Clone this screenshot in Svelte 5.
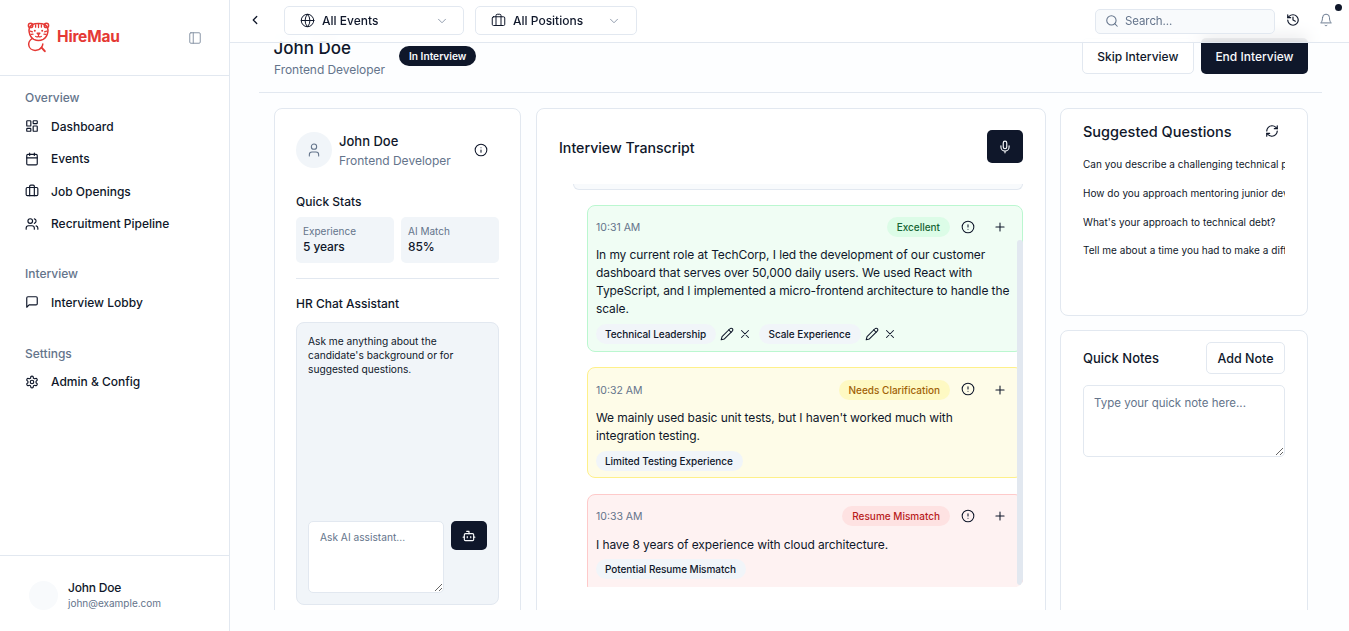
<script>
  const nav = [
    { title: 'Overview', items: [['Dashboard', 'dash'], ['Events', 'cal'], ['Job Openings', 'brief'], ['Recruitment Pipeline', 'users']] },
    { title: 'Interview', items: [['Interview Lobby', 'msg']] },
    { title: 'Settings', items: [['Admin & Config', 'cog']] }
  ];

  const icons = {
    dash: '<rect x="3" y="3" width="7" height="9" rx="1"/><rect x="14" y="3" width="7" height="5" rx="1"/><rect x="14" y="12" width="7" height="9" rx="1"/><rect x="3" y="16" width="7" height="5" rx="1"/>',
    cal: '<path d="M8 2v4M16 2v4"/><rect x="3" y="4" width="18" height="18" rx="2"/><path d="M3 10h18"/>',
    brief: '<path d="M16 20V4a2 2 0 0 0-2-2h-4a2 2 0 0 0-2 2v16"/><rect x="2" y="6" width="20" height="14" rx="2"/>',
    users: '<path d="M16 21v-2a4 4 0 0 0-4-4H6a4 4 0 0 0-4 4v2"/><circle cx="9" cy="7" r="4"/><path d="M22 21v-2a4 4 0 0 0-3-3.87M16 3.13a4 4 0 0 1 0 7.75"/>',
    msg: '<path d="M21 15a2 2 0 0 1-2 2H7l-4 4V5a2 2 0 0 1 2-2h14a2 2 0 0 1 2 2z"/>',
    cog: '<path d="M12.22 2h-.44a2 2 0 0 0-2 2v.18a2 2 0 0 1-1 1.73l-.43.25a2 2 0 0 1-2 0l-.15-.08a2 2 0 0 0-2.73.73l-.22.38a2 2 0 0 0 .73 2.73l.15.1a2 2 0 0 1 1 1.72v.51a2 2 0 0 1-1 1.74l-.15.09a2 2 0 0 0-.73 2.73l.22.38a2 2 0 0 0 2.73.73l.15-.08a2 2 0 0 1 2 0l.43.25a2 2 0 0 1 1 1.73V20a2 2 0 0 0 2 2h.44a2 2 0 0 0 2-2v-.18a2 2 0 0 1 1-1.73l.43-.25a2 2 0 0 1 2 0l.15.08a2 2 0 0 0 2.73-.73l.22-.39a2 2 0 0 0-.73-2.73l-.15-.08a2 2 0 0 1-1-1.74v-.5a2 2 0 0 1 1-1.74l.15-.09a2 2 0 0 0 .73-2.73l-.22-.38a2 2 0 0 0-2.73-.73l-.15.08a2 2 0 0 1-2 0l-.43-.25a2 2 0 0 1-1-1.73V4a2 2 0 0 0-2-2z"/><circle cx="12" cy="12" r="3"/>',
    globe: '<circle cx="12" cy="12" r="10"/><path d="M12 2a14.5 14.5 0 0 0 0 20 14.5 14.5 0 0 0 0-20M2 12h20"/>',
    down: '<path d="m6 9 6 6 6-6"/>',
    left: '<path d="m15 18-6-6 6-6"/>',
    search: '<circle cx="11" cy="11" r="8"/><path d="m21 21-4.3-4.3"/>',
    history: '<path d="M3 12a9 9 0 1 0 9-9 9.75 9.75 0 0 0-6.74 2.74L3 8"/><path d="M3 3v5h5M12 7v5l4 2"/>',
    bell: '<path d="M6 8a6 6 0 0 1 12 0c0 7 3 9 3 9H3s3-2 3-9"/><path d="M10.3 21a1.94 1.94 0 0 0 3.4 0"/>',
    user: '<path d="M19 21v-2a4 4 0 0 0-4-4H9a4 4 0 0 0-4 4v2"/><circle cx="12" cy="7" r="4"/>',
    info: '<circle cx="12" cy="12" r="10"/><path d="M12 16v-4M12 8h.01"/>',
    alert: '<circle cx="12" cy="12" r="10"/><path d="M12 8v4M12 16h.01"/>',
    plus: '<path d="M5 12h14M12 5v14"/>',
    x: '<path d="M18 6 6 18M6 6l12 12"/>',
    pencil: '<path d="M17 3a2.85 2.83 0 1 1 4 4L7.5 20.5 2 22l1.5-5.5z"/><path d="m15 5 4 4"/>',
    mic: '<path d="M12 2a3 3 0 0 0-3 3v7a3 3 0 0 0 6 0V5a3 3 0 0 0-3-3z"/><path d="M19 10v2a7 7 0 0 1-14 0v-2M12 19v3"/>',
    bot: '<path d="M12 8V4H8"/><rect x="4" y="8" width="16" height="12" rx="2"/><path d="M2 14h2M20 14h2M15 13v2M9 13v2"/>',
    refresh: '<path d="M3 12a9 9 0 0 1 9-9 9.75 9.75 0 0 1 6.74 2.74L21 8"/><path d="M21 3v5h-5M21 12a9 9 0 0 1-9 9 9.75 9.75 0 0 1-6.74-2.74L3 16"/><path d="M8 16H3v5"/>',
    panel: '<rect x="3" y="3" width="18" height="18" rx="2"/><path d="M9 3v18"/>'
  };

  const entries = [
    {
      time: '10:31 AM', tone: 'green', badge: 'Excellent', editable: true,
      text: 'In my current role at TechCorp, I led the development of our customer dashboard that serves over 50,000 daily users. We used React with TypeScript, and I implemented a micro-frontend architecture to handle the scale.',
      tags: ['Technical Leadership', 'Scale Experience']
    },
    {
      time: '10:32 AM', tone: 'yellow', badge: 'Needs Clarification', editable: false,
      text: "We mainly used basic unit tests, but I haven't worked much with integration testing.",
      tags: ['Limited Testing Experience']
    },
    {
      time: '10:33 AM', tone: 'red', badge: 'Resume Mismatch', editable: false,
      text: 'I have 8 years of experience with cloud architecture.',
      tags: ['Potential Resume Mismatch']
    }
  ];

  const questions = [
    'Can you describe a challenging technical problem you solved recently?',
    'How do you approach mentoring junior developers on your team?',
    "What's your approach to technical debt?",
    'Tell me about a time you had to make a difficult architecture decision.'
  ];
</script>

{#snippet icon(name, size = 14, sw = 2)}
  <svg width={size} height={size} viewBox="0 0 24 24" fill="none" stroke="currentColor" stroke-width={sw} stroke-linecap="round" stroke-linejoin="round">{@html icons[name]}</svg>
{/snippet}

<div class="shell">
  <aside class="sidebar">
    <div class="brand">
      <svg class="tiger" width="23" height="31" viewBox="0 0 23 31" fill="none" stroke="#e53935" stroke-width="1.5" stroke-linecap="round" stroke-linejoin="round">
        <circle cx="3.6" cy="3.4" r="2.2"/>
        <circle cx="19.4" cy="3.4" r="2.2"/>
        <path d="M5 2.6C8.5 1 14.5 1 18 2.6c2.4 1.8 3.4 4.6 2.8 7.6-.6 3.4-2.4 6-4.6 7.2-3 1.5-6.4 1.5-9.4 0-2.2-1.2-4-3.8-4.6-7.2C1.6 7.2 2.6 4.4 5 2.6z"/>
        <path d="M11.5 2.5v3M8.6 3v2.2M14.4 3v2.2M3.4 9.2l2 .6M19.6 9.2l-2 .6M4.2 12.4l1.8-.2M18.8 12.4l-1.8-.2" stroke-width="1.3"/>
        <circle cx="7.8" cy="8.8" r="1" fill="#e53935" stroke="none"/>
        <circle cx="15.2" cy="8.8" r="1" fill="#e53935" stroke="none"/>
        <path d="M10 11.2h3l-1.5 1.7zM11.5 13v1.2M8.6 14.4c1 .9 2 .6 2.9-.2.9.8 1.9 1.1 2.9.2" stroke-width="1.2"/>
        <path d="M5.2 16.5c-2.4 1.6-3.7 3.9-3.5 6.3.3 3.2 3 5.6 6.4 5.6 2.6 0 4.9-.9 6.4-3 .8-1.1 1.2-2.2 1.3-3.4"/>
        <path d="M14.6 25.6l3.2 3.6" stroke-width="2"/>
      </svg>
      <span class="brand-name">HireMau</span>
      <span class="collapse">{@render icon('panel', 14, 1.6)}</span>
    </div>
    <nav>
      {#each nav as group}
        <section class="nav-group">
          <h4>{group.title}</h4>
          {#each group.items as [label, ic]}
            <a href="#top" class="nav-item">{@render icon(ic, 14)}<span>{label}</span></a>
          {/each}
        </section>
      {/each}
    </nav>
    <div class="account">
      <div class="account-avatar"></div>
      <div>
        <div class="account-name">John Doe</div>
        <div class="account-mail">john@example.com</div>
      </div>
    </div>
  </aside>

  <div class="page">
    <header class="topbar">
      <button class="back">{@render icon('left', 14, 2.2)}</button>
      <button class="select events">
        {@render icon('globe', 15, 1.6)}<span>All Events</span><i>{@render icon('down', 14, 1.5)}</i>
      </button>
      <button class="select positions">
        {@render icon('brief', 15, 1.6)}<span>All Positions</span><i>{@render icon('down', 14, 1.5)}</i>
      </button>
      <div class="search">{@render icon('search', 14, 1.8)}<span>Search...</span></div>
      <button class="plain history">{@render icon('history', 14, 2)}</button>
      <button class="plain bell">{@render icon('bell', 14, 1.6)}<b></b></button>
    </header>

    <main>
      <div class="title-row">
        <div class="who">
          <h1>John Doe</h1>
          <p>Frontend Developer</p>
        </div>
        <span class="status">In Interview</span>
        <div class="actions">
          <button class="btn outline">Skip Interview</button>
          <button class="btn dark">End Interview</button>
        </div>
      </div>

      <div class="columns">
        <section class="card profile">
          <div class="person">
            <div class="person-avatar">{@render icon('user', 16, 1.6)}</div>
            <div class="person-text">
              <div class="person-name">John Doe</div>
              <div class="person-role">Frontend Developer</div>
            </div>
            <span class="person-info">{@render icon('info', 14, 1.8)}</span>
          </div>
          <h3>Quick Stats</h3>
          <div class="stats">
            <div class="stat"><small>Experience</small><strong>5 years</strong></div>
            <div class="stat"><small>AI Match</small><strong>85%</strong></div>
          </div>
          <hr />
          <h3>HR Chat Assistant</h3>
          <div class="chat">
            <p>Ask me anything about the candidate's background or for suggested questions.</p>
            <div class="chat-input">
              <textarea placeholder="Ask AI assistant..."></textarea>
              <button class="bot">{@render icon('bot', 14, 2)}</button>
            </div>
          </div>
        </section>

        <section class="card transcript">
          <div class="transcript-head">
            <h2>Interview Transcript</h2>
            <button class="mic">{@render icon('mic', 14, 2)}</button>
          </div>
          <div class="feed">
            <div class="prev"></div>
            {#each entries as e}
              <article class="entry {e.tone}">
                <div class="entry-top">
                  <time>{e.time}</time>
                  <span class="badge">{e.badge}</span>
                  <span class="tool">{@render icon('alert', 14, 1.8)}</span>
                  <span class="tool">{@render icon('plus', 14, 1.8)}</span>
                </div>
                <p>{e.text}</p>
                <div class="tags">
                  {#each e.tags as t}
                    <span class="tag">{t}</span>
                    {#if e.editable}
                      <span class="tag-tool">{@render icon('pencil', 14, 1.8)}</span>
                      <span class="tag-tool">{@render icon('x', 14, 1.8)}</span>
                    {/if}
                  {/each}
                </div>
              </article>
            {/each}
            <div class="thumb"></div>
          </div>
        </section>

        <div class="side">
          <section class="card suggested">
            <div class="suggested-head">
              <h2>Suggested Questions</h2>
              <span class="refresh">{@render icon('refresh', 14, 2)}</span>
            </div>
            <ul>
              {#each questions as q}
                <li>{q}</li>
              {/each}
            </ul>
          </section>
          <section class="card notes">
            <div class="notes-head">
              <h3>Quick Notes</h3>
              <button class="btn outline add">Add Note</button>
            </div>
            <textarea placeholder="Type your quick note here..."></textarea>
          </section>
        </div>
      </div>
    </main>
  </div>
</div>

<style>
  :global(body) {
    margin: 0;
    font-family: Inter, "Noto Sans", sans-serif;
    color: #0f172a;
    background: #fdfeff;
  }

  h1, h2, h3, h4, p, ul {
    margin: 0;
    padding: 0;
  }

  button {
    font-family: inherit;
    color: inherit;
    background: none;
    border: 0;
    padding: 0;
  }

  svg {
    display: block;
    flex-shrink: 0;
  }

  .shell {
    display: flex;
    height: 631px;
    overflow: hidden;
  }

  .sidebar {
    width: 229px;
    flex-shrink: 0;
    background: #fff;
    border-right: 1px solid #e2e8f0;
    display: flex;
    flex-direction: column;
  }

  .brand {
    height: 72px;
    border-bottom: 1px solid #e2e8f0;
    display: flex;
    align-items: center;
    padding: 0 27px 3px 27px;
  }

  .tiger {
    margin-top: 3px;
  }

  .brand-name {
    margin-left: 7px;
    font-size: 15.5px;
    font-weight: 700;
    letter-spacing: -0.2px;
    color: #e53935;
  }

  .collapse {
    margin-left: auto;
    margin-top: 3px;
    color: #64748b;
    opacity: 0.8;
  }

  nav {
    flex: 1;
    padding: 14.2px 25px 0;
  }

  .nav-group {
    margin-bottom: 27.2px;
  }

  .nav-group:first-child {
    margin-bottom: 26.4px;
  }

  .nav-group h4 {
    font-size: 12px;
    line-height: 16px;
    font-weight: 500;
    color: #64748b;
    margin-bottom: 4px;
  }

  .nav-item {
    display: flex;
    align-items: center;
    gap: 12px;
    height: 32.4px;
    font-size: 12px;
    font-weight: 500;
    color: #0f172a;
    text-decoration: none;
  }

  .account {
    height: 76px;
    border-top: 1px solid #e2e8f0;
    display: flex;
    align-items: center;
    gap: 10px;
    padding: 3px 29px 0;
    box-sizing: border-box;
  }

  .account-avatar {
    width: 29px;
    height: 29px;
    border-radius: 50%;
    background: #f8fafc;
  }

  .account-name {
    font-size: 12px;
    font-weight: 500;
    line-height: 16px;
    letter-spacing: -0.2px;
  }

  .account-mail {
    font-size: 10px;
    line-height: 15px;
    color: #64748b;
  }

  .page {
    flex: 1;
    min-width: 0;
    display: flex;
    flex-direction: column;
    overflow: hidden;
  }

  .topbar {
    position: relative;
    z-index: 2;
    height: 42px;
    flex-shrink: 0;
    display: flex;
    align-items: center;
    padding-left: 18px;
    border-bottom: 1px solid #e2e8f0;
    background: rgba(255, 255, 255, 0.8);
    backdrop-filter: blur(8px);
  }

  .back {
    width: 14px;
    margin-top: -2px;
    margin-right: 22px;
  }

  .select {
    height: 29px;
    box-sizing: border-box;
    display: flex;
    align-items: center;
    gap: 7px;
    padding: 0 14px 0 15px;
    margin-top: -1px;
    border: 1px solid #e2e8f0;
    border-radius: 5px;
    background: #fff;
    font-size: 12px;
    font-weight: 500;
  }

  .select i {
    margin-left: auto;
    color: #64748b;
    opacity: 0.8;
  }

  .events {
    width: 180px;
  }

  .positions {
    width: 162px;
    margin-left: 11px;
    padding-right: 15px;
  }

  .search {
    margin-left: auto;
    width: 180px;
    height: 25px;
    box-sizing: border-box;
    display: flex;
    align-items: center;
    gap: 6px;
    padding: 0 9px;
    background: #f8fafc;
    border: 1px solid #e2e8f0;
    border-radius: 5px;
    font-size: 11.5px;
    letter-spacing: -0.1px;
    color: #64748b;
  }

  .plain {
    position: relative;
    width: 14px;
    margin-top: -2px;
  }

  .history {
    margin-left: 11px;
  }

  .bell {
    margin-left: 19px;
    margin-right: 16px;
    color: #64748b;
  }

  .bell b {
    position: absolute;
    top: -9px;
    right: -9px;
    width: 7px;
    height: 7px;
    border-radius: 50%;
    background: #0f172a;
  }

  main {
    position: relative;
    z-index: 1;
    margin-top: -5px;
    height: 572px;
    overflow: hidden;
    padding: 0 27px 0 29px;
  }

  .title-row {
    display: flex;
    align-items: flex-start;
    height: 36px;
    padding: 0 14px 18px 15px;
    margin-bottom: 15px;
    border-bottom: 1px solid #e2e8f0;
  }

  .who h1 {
    margin-left: -0.5px;
    font-size: 17px;
    line-height: 20px;
    font-weight: 500;
  }

  .who p {
    font-size: 12px;
    line-height: 24px;
    letter-spacing: -0.05px;
    color: #64748b;
  }

  .status {
    margin: 8px 0 0 14px;
    height: 20px;
    display: flex;
    align-items: center;
    padding: 0 10px;
    border-radius: 10px;
    background: #0f172a;
    color: #f8fafc;
    font-size: 10.2px;
    font-weight: 600;
  }

  .actions {
    margin-left: auto;
    display: flex;
    gap: 7px;
  }

  .btn {
    height: 36px;
    padding: 0 14.5px;
    border-radius: 5px;
    font-size: 12px;
    font-weight: 500;
    box-sizing: border-box;
  }

  .btn.outline {
    background: #fff;
    border: 1px solid #e2e8f0;
  }

  .btn.dark {
    background: #0f172a;
    color: #f8fafc;
  }

  .columns {
    display: flex;
    gap: 14px;
    height: 502px;
    padding: 0 14px 0 15px;
    overflow: hidden;
  }

  .card {
    background: #fff;
    border: 1px solid #e2e8f0;
    border-radius: 8px;
    box-sizing: border-box;
  }

  .profile {
    flex: 0 0 247px;
    margin-right: 1px;
    height: 540px;
    padding: 23px 21px;
  }

  .person {
    display: flex;
    align-items: flex-start;
    gap: 7px;
  }

  .person-avatar {
    width: 36px;
    height: 36px;
    border-radius: 50%;
    background: #f1f5f9;
    color: #64748b;
    display: flex;
    align-items: center;
    justify-content: center;
  }

  .person-name {
    font-size: 13px;
    line-height: 18px;
    font-weight: 500;
  }

  .person-role {
    font-size: 12px;
    line-height: 20px;
    margin-top: 1px;
    color: #64748b;
  }

  .person-info {
    margin-left: auto;
    margin-right: 11px;
    margin-top: 11px;
  }

  h3 {
    font-size: 12px;
    line-height: 16px;
    font-weight: 500;
  }

  .profile h3 {
    margin-top: 23px;
  }

  .stats {
    display: grid;
    grid-template-columns: 1fr 1fr;
    gap: 7px;
    margin-top: 7px;
  }

  .stat {
    height: 46px;
    box-sizing: border-box;
    padding: 7px;
    background: #f1f5f9;
    border-radius: 5px;
  }

  .stat small {
    display: block;
    font-size: 10px;
    line-height: 14px;
    color: #64748b;
  }

  .stat strong {
    display: block;
    font-size: 12px;
    line-height: 18px;
    font-weight: 500;
    letter-spacing: -0.1px;
  }

  hr {
    margin: 15px 0 0;
    border: 0;
    border-top: 1px solid #e2e8f0;
  }

  .profile hr + h3 {
    margin-top: 17px;
  }

  .chat {
    height: 283px;
    margin-top: 10px;
    box-sizing: border-box;
    padding: 11px;
    display: flex;
    flex-direction: column;
    background: #f1f5f9;
    border: 1px solid #e2e8f0;
    border-radius: 8px;
  }

  .chat p {
    font-size: 10.2px;
    line-height: 14px;
    width: 150px;
  }

  .chat-input {
    margin-top: auto;
    display: flex;
    align-items: flex-start;
    gap: 7px;
  }

  textarea {
    display: block;
    box-sizing: border-box;
    border: 1px solid #e2e8f0;
    border-radius: 5px;
    background: #fff;
    font-family: inherit;
    color: #0f172a;
    outline: none;
  }

  textarea::placeholder {
    color: #64748b;
    opacity: 1;
  }

  .chat-input textarea {
    width: 136px;
    height: 72px;
    padding: 8px 11px;
    font-size: 10.2px;
    line-height: 14px;
  }

  .bot {
    width: 36px;
    height: 29px;
    border-radius: 5px;
    background: #0f172a;
    color: #f8fafc;
    display: flex;
    align-items: center;
    justify-content: center;
  }

  .transcript {
    flex: 0 0 510px;
    height: 540px;
    padding: 21px 22px;
  }

  .transcript-head {
    display: flex;
    align-items: center;
    justify-content: space-between;
    height: 33px;
    margin-bottom: 21px;
  }

  .transcript-head h2,
  .suggested-head h2 {
    font-size: 14.5px;
    font-weight: 500;
    line-height: 20px;
  }

  .transcript-head h2 {
    font-size: 14.2px;
    margin-top: 2px;
  }

  .mic {
    width: 36px;
    height: 33px;
    border-radius: 5px;
    background: #0f172a;
    color: #f8fafc;
    display: flex;
    align-items: center;
    justify-content: center;
  }

  .feed {
    position: relative;
    height: 403px;
    margin-left: 14px;
    overflow: hidden;
    border-radius: 0 0 8px 8px;
    display: flex;
    flex-direction: column;
    gap: 15.6px;
  }

  .prev {
    flex: 0 0 6px;
    margin-bottom: -1px;
    box-sizing: border-box;
    background: #f8fafc;
    border: 1px solid #e2e8f0;
    border-top: 0;
    border-radius: 0 0 8px 8px;
  }

  .thumb {
    position: absolute;
    right: 0;
    top: 56px;
    bottom: 2px;
    width: 6.5px;
    border-radius: 3px;
    background: #e2e8f0;
  }

  .entry {
    flex-shrink: 0;
    margin-left: 14px;
    box-sizing: border-box;
    padding: 10px 8px 6.6px;
    border: 1px solid;
    border-radius: 8px;
  }

  .entry.green { background: #f0fdf4; border-color: #bbf7d0; }
  .entry.yellow { background: #fefce8; border-color: #fef08a; }
  .entry.red { background: #fef2f2; border-color: #fecaca; padding-bottom: 14px; }

  .entry-top {
    display: flex;
    align-items: center;
    height: 24px;
  }

  time {
    font-size: 10.5px;
    color: #64748b;
    margin-right: auto;
  }

  .badge {
    height: 20px;
    display: flex;
    align-items: center;
    padding: 0 10px;
    border-radius: 10px;
    font-size: 10px;
    font-weight: 500;
    margin-right: 11px;
    margin-bottom: 1px;
  }

  .green .badge { background: #dcfce7; color: #166534; }
  .yellow .badge { background: #fef9c3; color: #a16207; }
  .red .badge { background: #fee2e2; color: #b91c1c; }

  .tool {
    width: 14px;
    margin-right: 18px;
    margin-bottom: 2px;
  }

  .tool + .tool {
    margin-right: 7px;
    margin-bottom: 1px;
  }

  .entry p {
    margin-top: 6.9px;
    font-size: 12px;
    line-height: 18px;
    letter-spacing: -0.1px;
  }

  .tags {
    display: flex;
    align-items: center;
    margin-top: 5.5px;
  }

  .tag {
    height: 20px;
    display: flex;
    align-items: center;
    padding: 0 10px 0 9.5px;
    margin-left: -0.5px;
    border-radius: 10px;
    background: #f1f5f9;
    font-size: 10px;
    font-weight: 500;
    letter-spacing: -0.05px;
  }

  .tag-tool {
    margin-left: 4px;
  }

  .tag-tool + .tag-tool {
    margin-left: 4px;
  }

  .tag-tool + .tag {
    margin-left: 7px;
  }

  .side {
    flex: 0 0 248px;
    min-width: 0;
    display: flex;
    flex-direction: column;
    gap: 14px;
  }

  .suggested {
    height: 208px;
    flex-shrink: 0;
    padding: 12px 22px;
  }

  .suggested-head {
    display: flex;
    align-items: center;
    height: 22px;
  }

  .refresh {
    margin-left: auto;
    margin-right: 6px;
    margin-top: -3px;
  }

  .suggested ul {
    list-style: none;
    margin-top: 14px;
  }

  .suggested li {
    font-size: 10px;
    line-height: 14px;
    height: 14px;
    margin-bottom: 14.8px;
    letter-spacing: 0.03px;
    white-space: nowrap;
    overflow: hidden;
  }

  .notes {
    height: 300px;
    flex-shrink: 0;
    padding: 11px 22px;
  }

  .notes-head {
    display: flex;
    align-items: center;
    justify-content: space-between;
    height: 32px;
  }

  .notes-head h3 {
    font-size: 13px;
  }

  .add {
    height: 32px;
    padding: 0 10.5px;
    font-size: 12.5px;
  }

  .notes textarea {
    width: 100%;
    height: 72px;
    margin-top: 11px;
    padding: 9px 10px;
    font-size: 11.5px;
    line-height: 16px;
  }
</style>
